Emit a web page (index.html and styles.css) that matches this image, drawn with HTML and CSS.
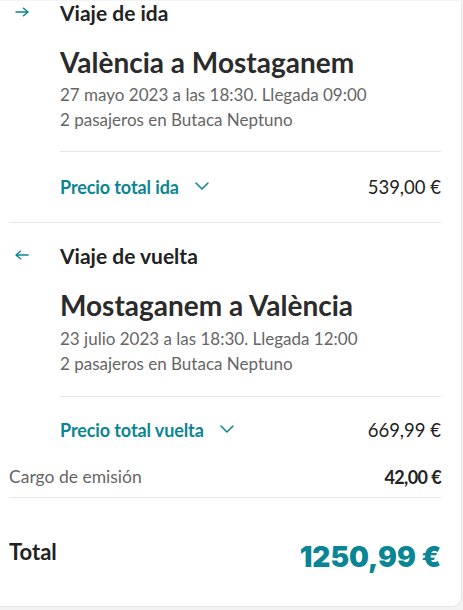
FILE: index.html
```html
<!DOCTYPE html>
<html lang="es">
<head>
<meta charset="utf-8">
<title>Resumen</title>
<link rel="stylesheet" href="styles.css">
</head>
<body>
<div class="card">
  <section class="trip trip-ida">
    <div class="trip-head">
      <span class="dir-icon">
        <svg width="14" height="10" viewBox="0 0 14 10"><path d="M1 5H13M8.5 1.2L13 5L8.5 8.8" fill="none" stroke="#0a8594" stroke-width="1.5" stroke-linecap="round" stroke-linejoin="round"/></svg>
      </span>
      <h2 class="trip-label">Viaje de ida</h2>
    </div>
    <div class="trip-body">
      <h1 class="route">València a Mostaganem</h1>
      <p class="detail">27 mayo 2023 a las 18:30. Llegada 09:00</p>
      <p class="detail">2 pasajeros en Butaca Neptuno</p>
      <div class="price-row">
        <span class="price-toggle">Precio total ida
          <svg class="chev" width="14" height="8" viewBox="0 0 14 8"><path d="M1 1L7 7L13 1" fill="none" stroke="#0a8594" stroke-width="1.5" stroke-linecap="round" stroke-linejoin="round"/></svg>
        </span>
        <span class="price">539,00 €</span>
      </div>
    </div>
  </section>
  <section class="trip trip-vuelta">
    <div class="trip-head">
      <span class="dir-icon">
        <svg width="14" height="10" viewBox="0 0 14 10"><path d="M13 5H1M5.5 1.2L1 5L5.5 8.8" fill="none" stroke="#0a8594" stroke-width="1.5" stroke-linecap="round" stroke-linejoin="round"/></svg>
      </span>
      <h2 class="trip-label">Viaje de vuelta</h2>
    </div>
    <div class="trip-body">
      <h1 class="route">Mostaganem a València</h1>
      <p class="detail">23 julio 2023 a las 18:30. Llegada 12:00</p>
      <p class="detail">2 pasajeros en Butaca Neptuno</p>
      <div class="price-row">
        <span class="price-toggle">Precio total vuelta
          <svg class="chev" width="14" height="8" viewBox="0 0 14 8"><path d="M1 1L7 7L13 1" fill="none" stroke="#0a8594" stroke-width="1.5" stroke-linecap="round" stroke-linejoin="round"/></svg>
        </span>
        <span class="price">669,99 €</span>
      </div>
    </div>
  </section>
  <div class="fee-row">
    <span class="fee-label">Cargo de emisión</span>
    <span class="fee-value">42,00 €</span>
  </div>
  <div class="total-row">
    <span class="total-label">Total</span>
    <span class="total-value">1250,99 €</span>
  </div>
</div>
</body>
</html>
```
FILE: styles.css
```css
* { box-sizing: border-box; }
html, body { margin: 0; padding: 0; }
body {
  background: #f3f3f3;
  font-family: Lato, "Open Sans", sans-serif;
  color: #222;
  width: 463px;
  height: 610px;
  overflow: hidden;
}
.card {
  width: 462px;
  height: 606px;
  background: #fff;
  border-right: 1px solid #e6e6e6;
  border-bottom: 1px solid #e6e6e6;
  border-bottom-right-radius: 10px;
  padding: 0 20px 0 9px;
}
.trip-head {
  display: flex;
  align-items: center;
  height: 24px;
}
.trip-ida .trip-head { margin-top: 1px; }
.trip-vuelta { border-top: 1px solid #e5e5e5; }
.trip-vuelta .trip-head { margin-top: 21px; }
.dir-icon {
  width: 51px;
  display: flex;
  padding-left: 6px;
  padding-bottom: 3px;
}
.trip-label {
  margin: 0;
  font-size: 21px;
  line-height: 24px;
  font-weight: 700;
  color: #222;
}
.trip-body {
  padding-left: 51px;
}
.route {
  margin: 20px 0 3px;
  font-size: 28px;
  line-height: 34px;
  font-weight: 700;
  color: #2b2b2b;
}
.trip-vuelta .route { margin-bottom: 4px; }
.detail {
  margin: 0;
  font-size: 17px;
  line-height: 25px;
  color: #666;
}
.price-row {
  margin-top: 19px;
  border-top: 1px solid #e5e5e5;
  display: flex;
  justify-content: space-between;
  align-items: center;
  padding: 23px 0 23px;
  line-height: 24px;
}
.trip-vuelta .price-row {
  margin-top: 20px;
  padding-top: 21px;
  padding-bottom: 12px;
}
.price-toggle {
  display: flex;
  align-items: center;
  gap: 16px;
  color: #0a8594;
  font-weight: 700;
  font-size: 18px;
  letter-spacing: -0.1px;
}
.chev { margin-top: -2px; }
.price {
  font-size: 18.5px;
  color: #222;
}
.fee-row {
  display: flex;
  justify-content: space-between;
  align-items: center;
  line-height: 24px;
  padding: 11px 0 8px;
  border-bottom: 1px solid #e5e5e5;
}
.fee-label {
  font-size: 17.5px;
  color: #666;
}
.fee-value {
  font-size: 18px;
  font-weight: 700;
  color: #222;
  letter-spacing: -0.6px;
}
.total-row {
  display: flex;
  justify-content: space-between;
  align-items: flex-start;
  padding-top: 40px;
}
.total-label {
  font-size: 22px;
  line-height: 28px;
  font-weight: 700;
  color: #222;
}
.total-value {
  font-family: Inter, "Open Sans", sans-serif;
  font-size: 28px;
  line-height: 34px;
  margin-top: 2px;
  font-weight: 900;
  color: #0a8594;
  letter-spacing: 0;
}
```
